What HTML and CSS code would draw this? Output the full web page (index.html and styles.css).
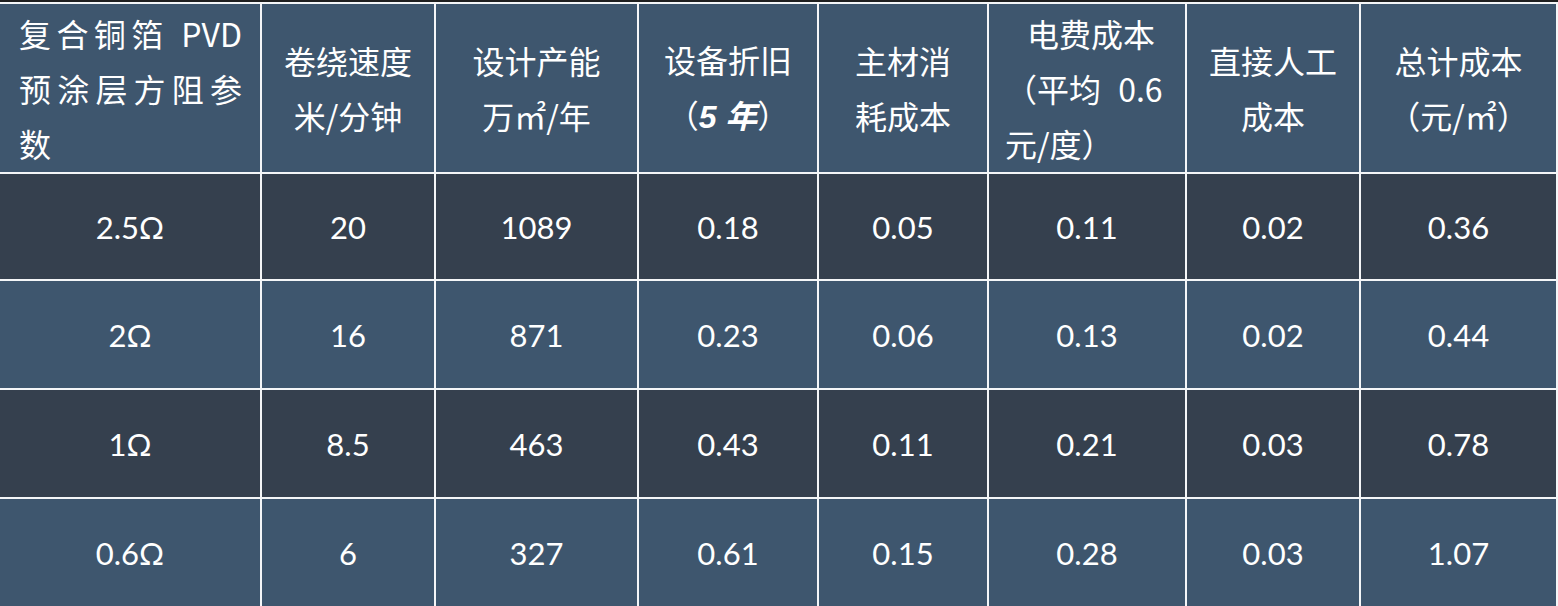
FILE: index.html
```html
<!DOCTYPE html>
<html lang="zh">
<head>
<meta charset="utf-8">
<link rel="stylesheet" href="styles.css">
</head>
<body>
<div class="table">
  <div class="cell head c1">
    <span class="ln just">复合铜箔 PVD</span>
    <span class="ln just">预涂层方阻参</span>
    <span class="ln left">数</span>
  </div>
  <div class="cell head"><span class="ln">卷绕速度</span><span class="ln">米/分钟</span></div>
  <div class="cell head"><span class="ln">设计产能</span><span class="ln">万㎡/年</span></div>
  <div class="cell head"><span class="ln">设备折旧</span><span class="ln">（<b class="bi">5 年</b>）</span></div>
  <div class="cell head"><span class="ln">主材消</span><span class="ln">耗成本</span></div>
  <div class="cell head c6">
    <span class="ln">电费成本</span>
    <span class="ln left sp">（平均 0.6</span>
    <span class="ln left">元/度）</span>
  </div>
  <div class="cell head"><span class="ln">直接人工</span><span class="ln">成本</span></div>
  <div class="cell head"><span class="ln">总计成本</span><span class="ln">（元/㎡）</span></div>

  <div class="cell dark">2.5Ω</div>
  <div class="cell dark">20</div>
  <div class="cell dark">1089</div>
  <div class="cell dark">0.18</div>
  <div class="cell dark">0.05</div>
  <div class="cell dark">0.11</div>
  <div class="cell dark">0.02</div>
  <div class="cell dark">0.36</div>

  <div class="cell light">2Ω</div>
  <div class="cell light">16</div>
  <div class="cell light">871</div>
  <div class="cell light">0.23</div>
  <div class="cell light">0.06</div>
  <div class="cell light">0.13</div>
  <div class="cell light">0.02</div>
  <div class="cell light">0.44</div>

  <div class="cell dark">1Ω</div>
  <div class="cell dark">8.5</div>
  <div class="cell dark">463</div>
  <div class="cell dark">0.43</div>
  <div class="cell dark">0.11</div>
  <div class="cell dark">0.21</div>
  <div class="cell dark">0.03</div>
  <div class="cell dark">0.78</div>

  <div class="cell light">0.6Ω</div>
  <div class="cell light">6</div>
  <div class="cell light">327</div>
  <div class="cell light">0.61</div>
  <div class="cell light">0.15</div>
  <div class="cell light">0.28</div>
  <div class="cell light">0.03</div>
  <div class="cell light">1.07</div>
</div>
</body>
</html>
```
FILE: styles.css
```css
html, body {
  margin: 0;
  padding: 0;
  background: #1f1f1f;
  overflow: hidden;
}
body {
  padding-top: 2px;
  width: 1558px;
  height: 604px;
}
.table {
  display: grid;
  grid-template-columns: 260px 172px 201px 178px 168px 196px 172px 195px;
  grid-template-rows: 168px 105px 107px 107px 107px;
  gap: 2px;
  padding: 2px 2px 0 0;
  background: #f4f6f8;
  font-family: "Lato", "Noto Sans CJK SC", sans-serif;
  font-weight: 400;
  color: #ffffff;
}
.cell {
  display: flex;
  flex-direction: column;
  align-items: stretch;
  justify-content: center;
  text-align: center;
}
.head {
  background: #3e566e;
  font-family: "Noto Sans CJK SC", sans-serif;
  font-weight: 400;
  font-size: 32px;
  line-height: 55px;
}
.dark {
  background: #35404e;
  font-size: 31px;
}
.light {
  background: #3e566e;
  font-size: 31px;
}
.c1 {
  padding: 0 18px 0 19px;
}
.c6 {
  padding: 0 8px 0 16px;
}
.ln {
  display: block;
  text-align: center;
  white-space: nowrap;
}
.just {
  text-align: justify;
  text-align-last: justify;
}
.left {
  text-align: left;
}
.sp {
  word-spacing: 10px;
}
.bi {
  font-style: italic;
  font-weight: 700;
  font-family: "Liberation Sans", "Noto Sans CJK SC", sans-serif;
  word-spacing: normal;
}
```
